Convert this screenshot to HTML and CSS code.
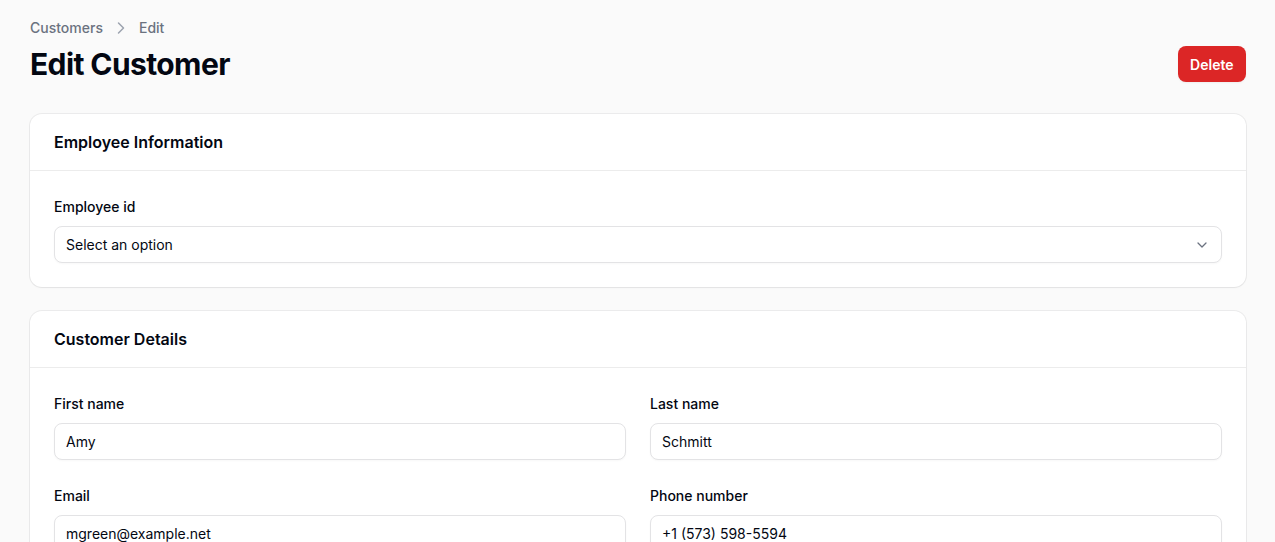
FILE: index.html
```html
<!DOCTYPE html>
<html>
<head>
<meta charset="utf-8">
<link rel="stylesheet" href="styles.css">
</head>
<body>
<div class="page">
  <nav class="breadcrumb">
    <span>Customers</span>
    <svg class="crumb-sep" viewBox="0 0 20 20" width="20" height="20"><path d="M7.5 5 12.5 10 7.5 15" fill="none" stroke="currentColor" stroke-width="1.5" stroke-linecap="round" stroke-linejoin="round"/></svg>
    <span>Edit</span>
  </nav>
  <div class="header">
    <h1 class="title">Edit Customer</h1>
    <button class="btn-danger">Delete</button>
  </div>

  <section class="card">
    <div class="card-head">Employee Information</div>
    <div class="card-body">
      <div class="field">
        <label class="label">Employee id</label>
        <div class="input select">
          <span>Select an option</span>
          <svg viewBox="0 0 20 20" width="16" height="16"><path d="M5 7.5 10 12.5 15 7.5" fill="none" stroke="currentColor" stroke-width="1.6" stroke-linecap="round" stroke-linejoin="round"/></svg>
        </div>
      </div>
    </div>
  </section>

  <section class="card">
    <div class="card-head">Customer Details</div>
    <div class="card-body grid">
      <div class="field">
        <label class="label">First name</label>
        <div class="input">Amy</div>
      </div>
      <div class="field">
        <label class="label">Last name</label>
        <div class="input">Schmitt</div>
      </div>
      <div class="field">
        <label class="label">Email</label>
        <div class="input">mgreen@example.net</div>
      </div>
      <div class="field">
        <label class="label">Phone number</label>
        <div class="input">+1 (573) 598-5594</div>
      </div>
    </div>
  </section>
</div>
</body>
</html>
```

FILE: styles.css
```css
* { box-sizing: border-box; }
html, body { margin: 0; padding: 0; }
body {
  background: #fafafa;
  font-family: Inter, "Noto Sans", sans-serif;
  color: #030712;
}
.page {
  width: 1216px;
  margin-left: 30px;
  padding-top: 18px;
  display: flex;
  flex-direction: column;
}
.breadcrumb {
  display: flex;
  align-items: center;
  gap: 8px;
  font-size: 14px;
  line-height: 20px;
  color: #6b7280;
  font-weight: 500;
}
.crumb-sep { color: #9ca3af; width: 20px; height: 20px; }
.header {
  margin-top: 8px;
  display: flex;
  justify-content: space-between;
  align-items: center;
}
.title {
  margin: 0;
  font-size: 30px;
  line-height: 36px;
  font-weight: 700;
  letter-spacing: -0.6px;
  color: #030712;
}
.btn-danger {
  background: #dc2626;
  color: #fff;
  border: none;
  border-radius: 8px;
  height: 36px;
  padding: 0 12.5px;
  font-family: inherit;
  font-size: 14px;
  font-weight: 600;
  box-shadow: 0 1px 2px rgba(0,0,0,0.05);
}
.card {
  margin-top: 32px;
  background: #fff;
  border-radius: 12px;
  box-shadow: 0 0 0 1px rgba(3,7,18,0.06), 0 1px 2px rgba(0,0,0,0.04);
}
.card + .card { margin-top: 24px; }
.card-head {
  padding: 16px 24px;
  font-size: 16px;
  line-height: 24px;
  font-weight: 600;
  border-bottom: 1px solid #ececec;
}
.card-body { padding: 24px; }
.grid {
  display: grid;
  grid-template-columns: 1fr 1fr;
  gap: 24px;
}
.field {
  display: flex;
  flex-direction: column;
  gap: 7px;
}
.label {
  font-size: 14px;
  line-height: 24px;
  font-weight: 500;
  color: #030712;
}
.input {
  height: 37px;
  border: 1px solid #e3e3e5;
  border-radius: 8px;
  padding: 0 11px;
  display: flex;
  align-items: center;
  font-size: 14px;
  color: #030712;
  background: #fff;
  box-shadow: 0 1px 2px rgba(0,0,0,0.03);
}
.select { justify-content: space-between; padding-right: 11px; }
.select svg { color: #6b7280; }
```
